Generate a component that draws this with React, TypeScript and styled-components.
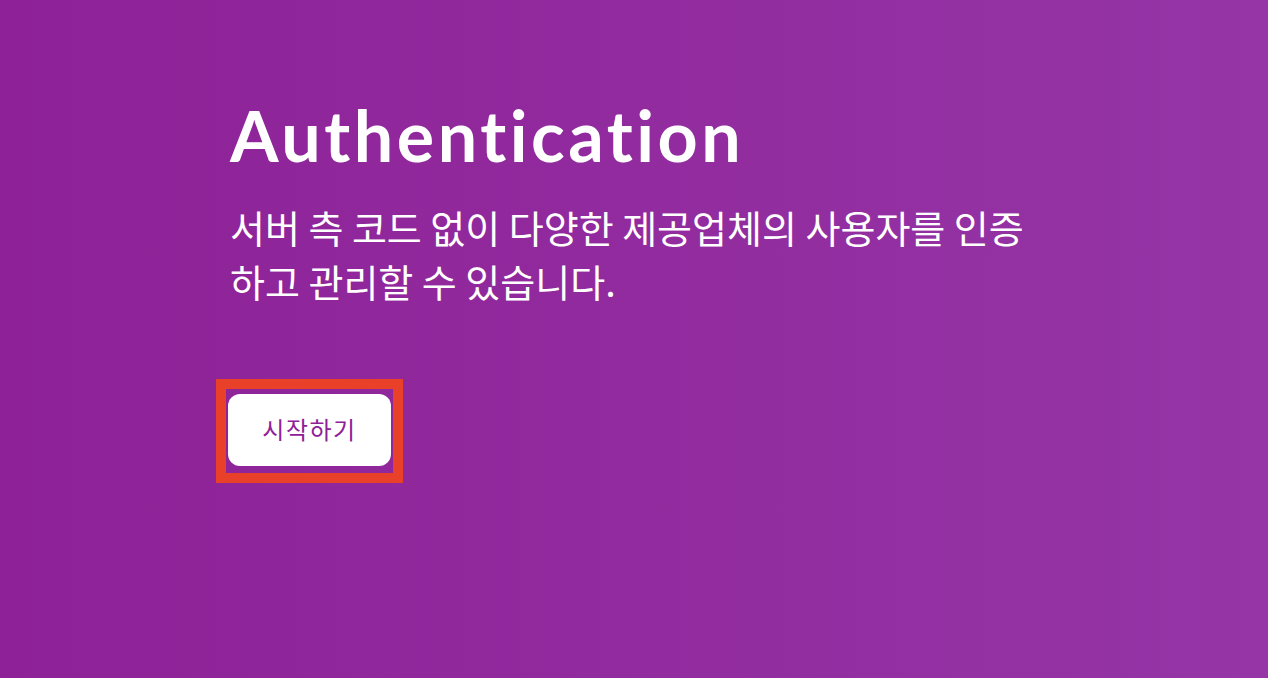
import styled, { createGlobalStyle } from 'styled-components';

const GlobalStyle = createGlobalStyle`
	html, body {
		margin: 0;
		padding: 0;
	}
	body {
		font-family: "Noto Sans", "Noto Sans CJK KR", sans-serif;
	}
`;

const Hero = styled.main`
	min-height: 678px;
	background: linear-gradient(90deg, #8e2197 0%, #9535a6 100%);
	color: #ffffff;
	display: flex;
	padding-left: 230px;
	box-sizing: border-box;
`;

const Content = styled.section`
	width: 814px;
	padding-top: 93px;
	display: flex;
	flex-direction: column;
	align-items: flex-start;
`;

const Title = styled.h1`
	margin: 0;
	font-family: Lato, "Noto Sans", sans-serif;
	font-weight: 700;
	font-size: 70px;
	line-height: 84px;
	letter-spacing: 3.5px;
`;

const Lead = styled.p`
	margin: 23px 0 0;
	font-family: "Noto Sans CJK KR", sans-serif;
	font-weight: 400;
	font-size: 38px;
	line-height: 54px;
`;

const Highlight = styled.div`
	margin-top: 71px;
	margin-left: -14px;
	border: 10px solid #e9402a;
	padding: 5px 2px 7px;
	display: inline-flex;
`;

const StartButton = styled.button`
	width: 163px;
	height: 72px;
	border: none;
	border-radius: 12px;
	background: #ffffff;
	color: #8e2197;
	font-family: "Noto Sans CJK KR", sans-serif;
	font-size: 24px;
	letter-spacing: 1.5px;
	cursor: pointer;
	display: flex;
	align-items: center;
	justify-content: center;
	padding: 0 0 4px;
`;

function App()
{
	return (
		<>
			<GlobalStyle />
			<Hero>
				<Content>
					<Title>Authentication</Title>
					<Lead>서버 측 코드 없이 다양한 제공업체의 사용자를 인증하고 관리할 수 있습니다.</Lead>
					<Highlight>
						<StartButton>시작하기</StartButton>
					</Highlight>
				</Content>
			</Hero>
		</>
	);
}

export default App;
